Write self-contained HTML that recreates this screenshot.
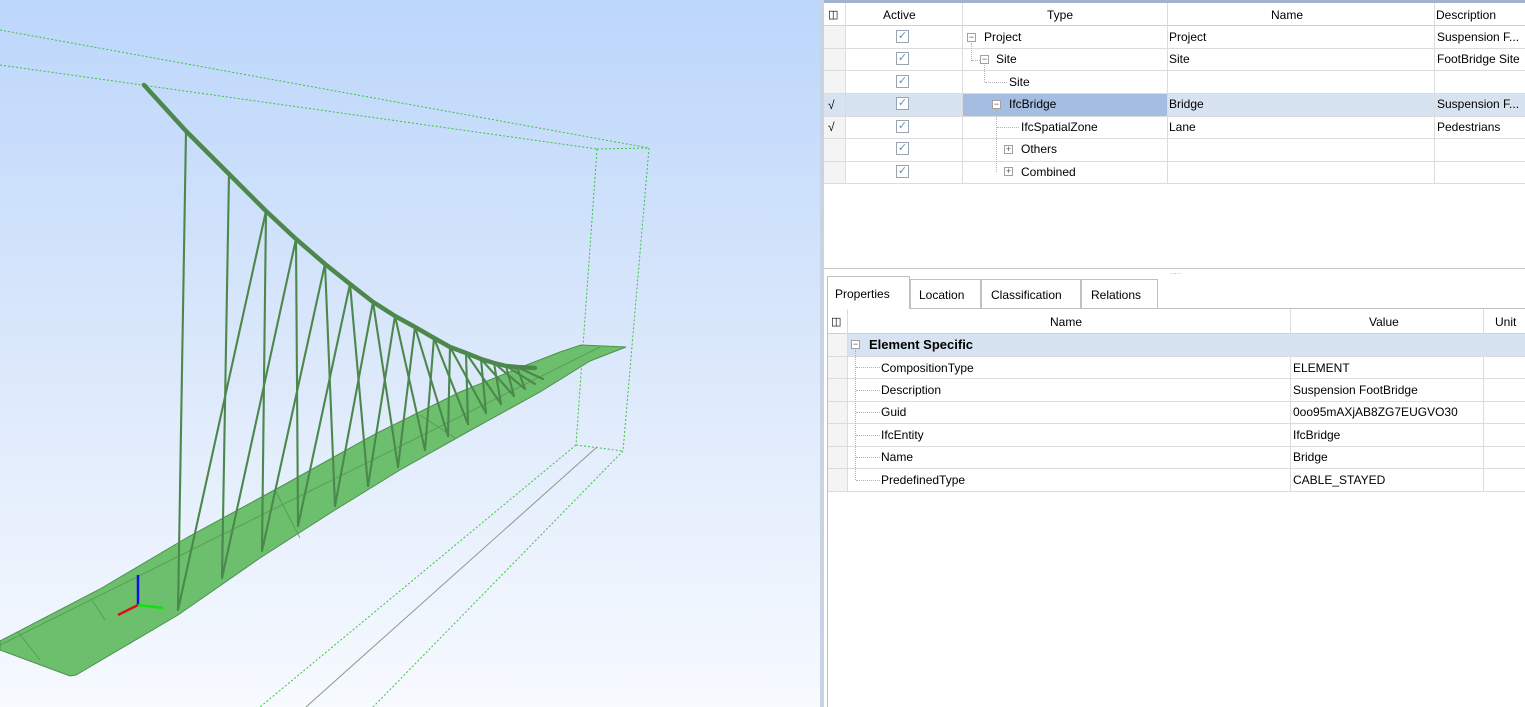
<!DOCTYPE html>
<html><head><meta charset="utf-8"><style>
*{margin:0;padding:0;box-sizing:border-box}
body{width:1525px;height:707px;overflow:hidden;position:relative;font-family:"Liberation Sans",Tahoma,sans-serif;font-size:12px;color:#000;background:#fff}
#view{position:absolute;left:0;top:0;width:822px;height:707px;background:linear-gradient(#bcd6fb,#dbe8fb 50%,#f7faff)}
#split{position:absolute;left:820px;top:0;width:4px;height:707px;background:#c8d4e4}
.p{position:absolute;left:824px;right:0;background:#fff}
.t{position:absolute;white-space:nowrap;line-height:22px;height:22px}
.hl{position:absolute;height:1px;background:#dcdcdc}
.vl{position:absolute;width:1px;background:#dcdcdc}
.cb{position:absolute;width:13px;height:13px;border:1px solid #9aa4b0;background:#fff;color:#6a8fb5;font-size:11px;line-height:11px;text-align:center}
.box{position:absolute;width:9px;height:9px;border:1px solid #a0a0a0;background:#fff;font-size:9px;line-height:7px;text-align:center;color:#555}
.dot{position:absolute;border-top:1px dotted #b4b4b4}
.dotv{position:absolute;border-left:1px dotted #b4b4b4}
</style></head><body>
<div id="view">
<svg width="822" height="707" viewBox="0 0 822 707" style="position:absolute;left:0;top:0">
<g stroke="#3ec23e" stroke-width="1" stroke-dasharray="2,2" fill="none">
<line x1="0" y1="30" x2="649" y2="148"/>
<line x1="0" y1="65" x2="597" y2="149"/>
<line x1="597" y1="149" x2="649" y2="148"/>
<line x1="649" y1="148" x2="623" y2="451"/>
<line x1="597" y1="149" x2="576" y2="445"/>
<line x1="576" y1="445" x2="623" y2="451"/>
<line x1="576" y1="445" x2="260" y2="707"/>
<line x1="623" y1="451" x2="373" y2="707"/>
</g>
<line x1="597" y1="447" x2="306" y2="707" stroke="#8a9a8a" stroke-width="1"/>
<polygon points="0,641 100,589 188,537 280,487 377,433 460,392 524,366 560,352 581,345 626,347 590,361 540,392 471,430 400,470 335,510 260,558 178,615 76,675 70,676 0,650" fill="#6cbf6c" stroke="#4e904e" stroke-width="1"/>
<g stroke="#4f8f4f" stroke-width="1" opacity=".7"><line x1="0" y1="645" x2="600" y2="347"/><line x1="40" y1="660" x2="18" y2="632"/><line x1="105" y1="620" x2="92" y2="600"/><line x1="300" y1="538" x2="275" y2="490"/><line x1="455" y1="438" x2="420" y2="415"/></g>
<g id="h" stroke="#4c874c" stroke-width="2.1" fill="none" stroke-linecap="round"></g>
<path d="M144,85 L186,131 L229,174 L266,211 L296,239 L325,264 L350,284 L373,302 L395,316 L415,327 L434,338 L450,347 L466,353 L481,359 L494,363 L506,366 L517,367 L535,368" stroke="#4c874c" stroke-width="4.5" fill="none" stroke-linejoin="round" stroke-linecap="round"/>
<line x1="138" y1="605" x2="138" y2="575" stroke="#1010e0" stroke-width="2.5"/>
<line x1="138" y1="605" x2="118" y2="615" stroke="#e01010" stroke-width="2.5"/>
<line x1="138" y1="605" x2="163" y2="608" stroke="#10e010" stroke-width="2.5"/>
</svg>
</div>
<script>
var C=[[186,131],[229,174],[266,211],[296,239],[325,264],[350,284],[373,302],[395,316],[415,327],[434,338],[450,347],[466,353],[481,359],[494,363],[506,366],[517,367]];
var D=[[178,610],[222,578],[262,551],[298,526],[335,506],[368,486],[398,467],[425,450],[448,436],[468,424],[486,413],[501,404],[514,396],[525,389],[535,384],[543,379]];
var s='';for(var i=0;i<C.length;i++){s+='<line x1="'+C[i][0]+'" y1="'+C[i][1]+'" x2="'+D[i][0]+'" y2="'+D[i][1]+'"/>';if(i>=2)s+='<line x1="'+C[i][0]+'" y1="'+C[i][1]+'" x2="'+D[i-2][0]+'" y2="'+D[i-2][1]+'"/>';}
document.getElementById('h').innerHTML=s;
</script>
<div id="split"></div>
<div class="p" style="top:0;height:270px">
<div style="position:absolute;left:0;right:0;top:0;height:3px;background:#9fb3cf"></div>
<div style="position:absolute;left:0;right:0;top:3px;height:23px;background:#fff;border-bottom:1px solid #d0d0d0"></div>
<div style="position:absolute;left:0;top:26px;width:21px;height:158px;background:#f4f4f4"></div>
<div style="position:absolute;left:0;right:0;top:93px;height:23px;background:#d8e3f2"></div>
<div style="position:absolute;left:138px;top:93px;width:205px;height:23px;background:#a5bde0"></div>
<div class="t" style="left:4px;top:4px;font-size:11px">&#9707;</div>
<div class="t" style="left:59px;top:4px">Active</div>
<div class="t" style="left:223px;top:4px">Type</div>
<div class="t" style="left:447px;top:4px">Name</div>
<div class="t" style="left:612px;top:4px">Description</div>
<div class="vl" style="left:21px;top:3px;height:181px"></div>
<div class="vl" style="left:138px;top:3px;height:181px"></div>
<div class="vl" style="left:343px;top:3px;height:181px"></div>
<div class="vl" style="left:610px;top:3px;height:181px"></div>
<div class="hl" style="left:0;right:0;top:48px"></div><div class="hl" style="left:0;right:0;top:70px"></div><div class="hl" style="left:0;right:0;top:93px"></div><div class="hl" style="left:0;right:0;top:116px"></div><div class="hl" style="left:0;right:0;top:138px"></div><div class="hl" style="left:0;right:0;top:161px"></div><div class="hl" style="left:0;right:0;top:183px"></div>
<div class="cb" style="left:72px;top:30px">✓</div><div class="cb" style="left:72px;top:52px">✓</div><div class="cb" style="left:72px;top:75px">✓</div><div class="cb" style="left:72px;top:97px">✓</div><div class="cb" style="left:72px;top:120px">✓</div><div class="cb" style="left:72px;top:142px">✓</div><div class="cb" style="left:72px;top:165px">✓</div>
<div class="t" style="left:4px;top:94px">√</div><div class="t" style="left:4px;top:116px">√</div>
<div class="box" style="left:143px;top:33px">−</div><div class="t" style="left:160px;top:26px">Project</div>
<div class="dotv" style="left:147px;top:43px;height:18px"></div><div class="dot" style="left:148px;top:60px;width:8px"></div>
<div class="box" style="left:156px;top:55px">−</div><div class="t" style="left:172px;top:48px">Site</div>
<div class="dotv" style="left:160px;top:65px;height:17px"></div><div class="dot" style="left:161px;top:82px;width:22px"></div>
<div class="t" style="left:185px;top:71px">Site</div>
<div class="box" style="left:168px;top:100px">−</div><div class="t" style="left:185px;top:93px">IfcBridge</div>
<div class="dotv" style="left:172px;top:110px;height:62px"></div><div class="dot" style="left:173px;top:127px;width:22px"></div>
<div class="t" style="left:197px;top:116px">IfcSpatialZone</div>
<div class="box" style="left:180px;top:145px">+</div><div class="t" style="left:197px;top:138px">Others</div>
<div class="box" style="left:180px;top:167px">+</div><div class="t" style="left:197px;top:161px">Combined</div>
<div class="t" style="left:345px;top:26px">Project</div><div class="t" style="left:345px;top:48px">Site</div><div class="t" style="left:345px;top:93px">Bridge</div><div class="t" style="left:345px;top:116px">Lane</div>
<div class="t" style="left:613px;top:26px">Suspension F...</div><div class="t" style="left:613px;top:48px">FootBridge Site</div><div class="t" style="left:613px;top:93px">Suspension F...</div><div class="t" style="left:613px;top:116px">Pedestrians</div>
<div style="position:absolute;left:0;right:0;top:268px;height:1px;background:#c8c8c8"></div>
</div>
<div class="p" style="top:270px;height:437px">
<div class="t" style="left:346px;top:-9px;font-size:8px;color:#aaa">.....</div>
<div style="position:absolute;left:3px;right:0;top:38px;height:1px;background:#c0c0c0"></div>
<div style="position:absolute;left:3px;top:6px;width:83px;height:33px;border:1px solid #c0c0c0;border-bottom:none;background:#fff"></div>
<div class="t" style="left:11px;top:13px">Properties</div>
<div style="position:absolute;left:86px;top:9px;width:71px;height:29px;border:1px solid #c0c0c0;border-bottom:none"></div><div class="t" style="left:95px;top:14px">Location</div>
<div style="position:absolute;left:157px;top:9px;width:100px;height:29px;border:1px solid #c0c0c0;border-bottom:none"></div><div class="t" style="left:167px;top:14px">Classification</div>
<div style="position:absolute;left:257px;top:9px;width:77px;height:29px;border:1px solid #c0c0c0;border-bottom:none"></div><div class="t" style="left:267px;top:14px">Relations</div>
<div style="position:absolute;left:3px;top:39px;width:1px;height:398px;background:#c0c0c0"></div>
<div style="position:absolute;left:4px;right:0;top:63px;height:1px;background:#d0d0d0"></div>
<div style="position:absolute;left:4px;top:64px;width:19px;height:157px;background:#f4f4f4"></div>
<div style="position:absolute;left:23px;right:0;top:64px;height:22px;background:#d8e3f2"></div>
<div class="t" style="left:7px;top:41px;font-size:11px">&#9707;</div>
<div class="t" style="left:226px;top:41px">Name</div><div class="t" style="left:545px;top:41px">Value</div><div class="t" style="left:671px;top:41px">Unit</div>
<div class="vl" style="left:23px;top:39px;height:182px"></div>
<div class="vl" style="left:466px;top:39px;height:25px"></div><div class="vl" style="left:466px;top:86px;height:135px"></div>
<div class="vl" style="left:659px;top:39px;height:25px"></div><div class="vl" style="left:659px;top:86px;height:135px"></div>
<div class="hl" style="left:4px;right:0;top:86px"></div><div class="hl" style="left:4px;right:0;top:108px"></div><div class="hl" style="left:4px;right:0;top:131px"></div><div class="hl" style="left:4px;right:0;top:153px"></div><div class="hl" style="left:4px;right:0;top:176px"></div><div class="hl" style="left:4px;right:0;top:198px"></div><div class="hl" style="left:4px;right:0;top:221px"></div>
<div class="box" style="left:27px;top:70px">−</div>
<div class="t" style="left:45px;top:64px;font-weight:bold;font-size:13px">Element Specific</div>
<div class="dotv" style="left:31px;top:80px;height:130px"></div>
<div class="dot" style="left:32px;top:97px;width:24px"></div><div class="dot" style="left:32px;top:120px;width:24px"></div><div class="dot" style="left:32px;top:142px;width:24px"></div><div class="dot" style="left:32px;top:165px;width:24px"></div><div class="dot" style="left:32px;top:187px;width:24px"></div><div class="dot" style="left:32px;top:210px;width:24px"></div>
<div class="t" style="left:57px;top:87px">CompositionType</div><div class="t" style="left:57px;top:109px">Description</div><div class="t" style="left:57px;top:131px">Guid</div><div class="t" style="left:57px;top:154px">IfcEntity</div><div class="t" style="left:57px;top:176px">Name</div><div class="t" style="left:57px;top:199px">PredefinedType</div>
<div class="t" style="left:469px;top:87px">ELEMENT</div><div class="t" style="left:469px;top:109px">Suspension FootBridge</div><div class="t" style="left:469px;top:131px">0oo95mAXjAB8ZG7EUGVO30</div><div class="t" style="left:469px;top:154px">IfcBridge</div><div class="t" style="left:469px;top:176px">Bridge</div><div class="t" style="left:469px;top:199px">CABLE_STAYED</div>
</div>
</body></html>
